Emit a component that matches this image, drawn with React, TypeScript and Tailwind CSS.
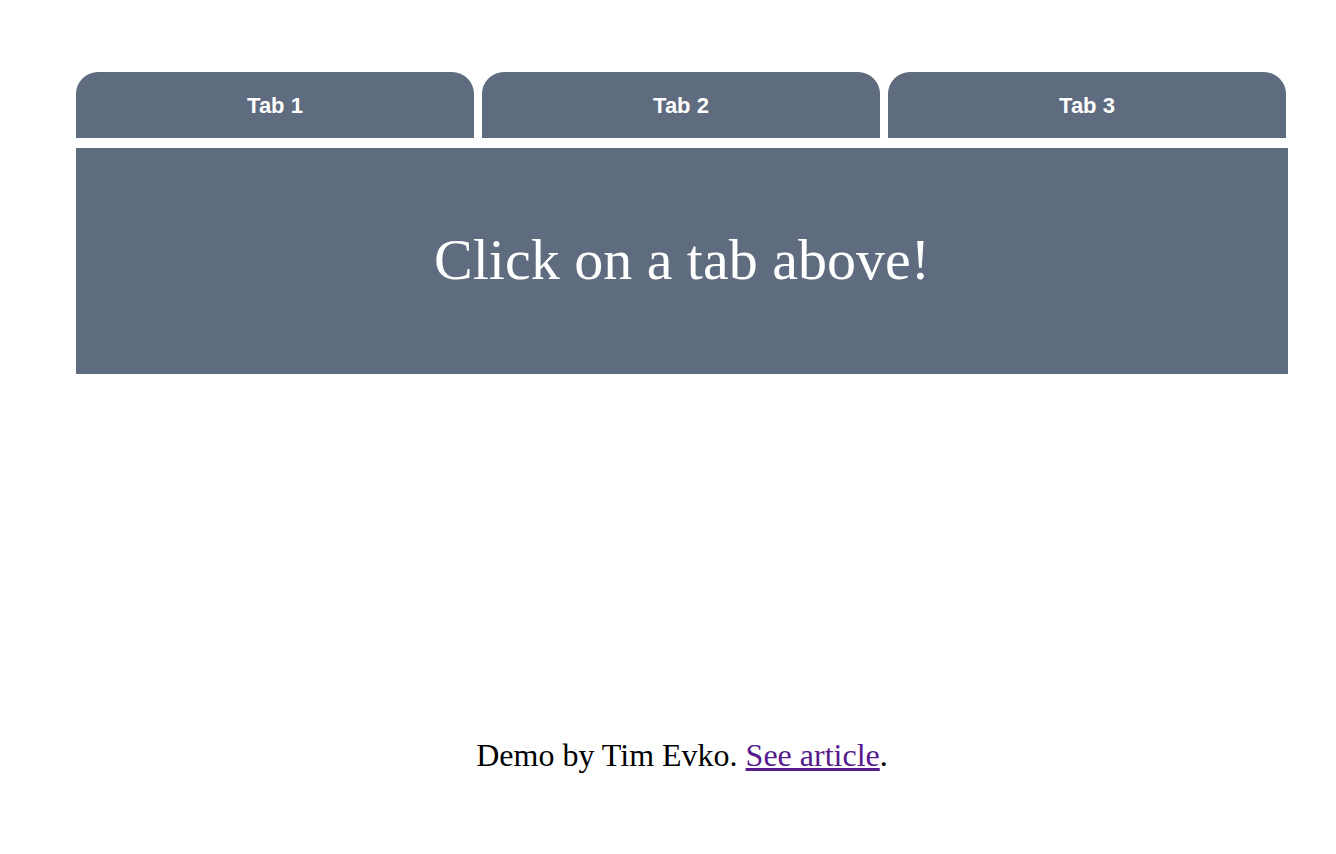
import { useState } from 'react';

const tabs = ['Tab 1', 'Tab 2', 'Tab 3'];

export default function App() {
  const [active, setActive] = useState<number | null>(null);

  return (
    <div className="min-h-[854px] bg-white font-['Liberation_Serif',serif]">
      <div className="pt-[72px] pl-[76px] w-[1288px]">
        <div className="flex gap-[8px] w-[1210px]">
          {tabs.map((tab, i) => (
            <button
              key={tab}
              onClick={() => setActive(i)}
              className="flex-1 h-[66px] rounded-t-[22px] bg-[#5f6b7e] text-white text-[22px] font-bold font-['Liberation_Sans',Arial,sans-serif] flex items-center justify-center"
            >
              {tab}
            </button>
          ))}
        </div>
        <div className="mt-[10px] h-[226px] bg-[#5f6b7e] flex items-center justify-center pb-[2px]">
          <h1 className="text-[58px] text-white leading-none">
            {active === null ? 'Click on a tab above!' : `This is ${tabs[active]}`}
          </h1>
        </div>
        <p className="mt-[357px] text-center text-[32px] text-black">
          Demo by Tim Evko.{' '}
          <a href="#" className="text-[#551a8b] underline">
            See article
          </a>
          .
        </p>
      </div>
    </div>
  );
}
